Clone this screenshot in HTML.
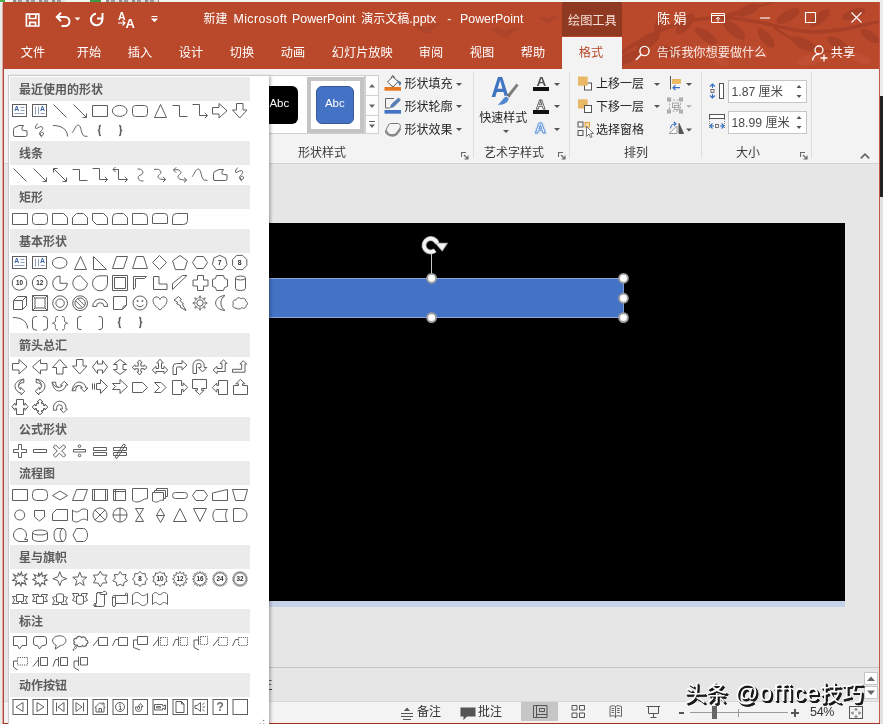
<!DOCTYPE html>
<html lang="zh-CN">
<head>
<meta charset="utf-8">
<title>PowerPoint</title>
<style>
html,body{margin:0;padding:0;}
body{width:883px;height:724px;overflow:hidden;background:#e9ece6;font-family:"Liberation Sans","Noto Sans CJK SC",sans-serif;font-size:12px;color:#262626;}
#outer{position:relative;width:883px;height:724px;overflow:hidden;will-change:transform;}
#outer div,#outer svg{position:absolute;}
.t{white-space:nowrap;line-height:16px;height:16px;}
/* strips from other windows */
#stripT{left:0;top:0;width:883px;height:3px;background:#f1f3ee;}
#stripL{left:0;top:0;width:3px;height:724px;background:#e9ece6;}
#stripR{left:880px;top:0;width:3px;height:724px;background:#ececec;}
#stripR2{left:880px;top:96px;width:3px;height:101px;background:#222;}
#stripR3{left:880px;top:197px;width:3px;height:527px;background:#e2e2e2;}
#stripB{display:none;}
/* window */
#win{left:3px;top:2px;width:877px;height:722px;background:#e6e6e6;}
#winborder{display:none;}
#bL1{left:2px;top:3px;width:1px;height:721px;background:#e6aaa2;}
#bL2{left:3px;top:2px;width:1px;height:722px;background:#a8443a;}
#bR{left:879px;top:2px;width:1px;height:722px;background:#c4584a;}
#bB1{left:4px;top:721px;width:875px;height:2px;background:#fbeee9;}
#bB2{left:3px;top:723px;width:877px;height:1px;background:#99352c;}
#titlebar{left:3px;top:2px;width:877px;height:67px;background:#ba482b;overflow:hidden;}
#titlebar .t{color:#fff;}
#ctxtab{left:559px;top:0;width:60px;height:34px;background:#8f3922;}
#fmttab{left:559px;top:35px;width:60px;height:33px;background:#f3f3f3;}
.tab{top:44.7px;font-size:12.2px;}
/* ribbon */
#ribbon{left:4px;top:69px;width:875px;height:94px;background:#f3f3f3;border-bottom:1px solid #d2d2d2;}
.gsep{width:1px;height:86px;background:#dedede;}
.glabel{top:76px;font-size:12px;color:#3a3a3a;}
.rt{font-size:12px;color:#262626;}
.dd{width:0;height:0;border-left:3px solid transparent;border-right:3px solid transparent;border-top:3px solid #555;}
/* work */
#work{left:4px;top:164px;width:875px;height:537px;background:#e6e6e6;}
#slide{left:200px;top:223px;width:645px;height:378px;background:#000;}
#slideshadow{left:200px;top:601px;width:645px;height:5.5px;background:#c5d2e7;}
#shape{left:200px;top:278px;width:423.500px;height:40px;border-right:1px solid #7f9bd3;background:#4472c4;border-top:1px solid #8fa6d6;border-bottom:1px solid #8fa6d6;box-sizing:border-box;}
.hd{width:7.400px;height:7.400px;border-radius:50%;background:#fff;border:1.600px solid #a9a9a9;box-sizing:content-box;}
#notesline{left:268px;top:667px;width:611px;height:1px;background:#c4c4c4;}
/* status */
#status{left:4px;top:701px;width:875px;height:22px;background:#f3f3f3;border-top:1px solid #d6d6d6;box-sizing:border-box;}
.st{font-size:12px;color:#333;top:704px;}
/* panel */
#panel{left:8px;top:76px;width:260.500px;height:648px;background:#fff;box-shadow:1.500px 0 2.500px rgba(0,0,0,0.250);}
#panel:before{content:"";position:absolute;left:0;top:-1px;width:1px;height:649px;background:#c9c9cf;}
#panel:after{content:"";position:absolute;left:0;top:-1px;width:260.500px;height:1px;background:#c9c9cf;}
#panel .sh{left:2px;width:240px;height:24px;line-height:26px;background:#ebebeb;color:#5c5c5c;font-weight:bold;font-size:12px;padding-left:9px;box-sizing:border-box;margin-top:-76px;white-space:nowrap;}
#iconsvg{left:0;top:0;}
#iconsvg text.n{font-family:"Liberation Sans",sans-serif;stroke:none;text-anchor:middle;}
#iconsvg text[fill="#3c63a8"]{text-anchor:start;}
#grip{left:250px;top:642.500px;}
/* watermark */
#wm{left:684.500px;top:676.500px;font-size:21.600px;font-weight:400;line-height:32px;height:32px;color:#fff;white-space:nowrap;text-shadow:1px 1px 0 #1a1a1a,2px 2px 0 #1a1a1a,1.500px 2px 0 #1a1a1a,2px 1.500px 0 #1a1a1a;}
#wm .la{font-size:23.200px;font-weight:400;letter-spacing:1px;margin-left:1px;}

#ttl .cj{font-size:12px;}
#ttl .w{display:inline-block;vertical-align:top;}
#deco{overflow:visible;}

</style>
</head>
<body>
<div id="outer">
<div id="stripT"></div><div id="stripL"></div><div id="stripR"></div><div id="stripR2"></div><div id="stripR3"></div><div id="stripB"></div>
<div id="tb1" style="left:0;top:0;width:5px;height:2px;background:#4caf50"></div><div style="left:13px;top:0;width:52px;height:2px;background:repeating-linear-gradient(90deg,#8d8d8d 0 3px,#d9dcd6 3px 5px,#9a9a9a 5px 9px,#e2e4df 9px 13px)"></div><div style="left:90px;top:0;width:11px;height:2px;background:#3d9b47"></div><div style="left:106px;top:0;width:53px;height:2px;background:repeating-linear-gradient(90deg,#8d8d8d 0 3px,#d9dcd6 3px 5px,#9a9a9a 5px 9px,#e2e4df 9px 13px)"></div>
<div id="win"></div>
<div id="titlebar">
<svg id="deco" width="360" height="67" viewBox="0 0 360 67" style="left:517px;top:0">
<g fill="#a33f25" opacity="0.800">
<path d="M85 62C110 40 150 14 200 14C240 14 270 30 300 28C330 26 345 20 360 18V21C345 24 330 30 300 31.500C270 33 240 18 200 17.500C152 17 112 44 88 64Z"/>
<path d="M200 15C215 8 235 4 250 0H256C238 6 220 11 204 18Z"/>
<path d="M255 24C275 40 300 50 330 50L329 52C300 53 273 42 253 26Z"/>
<ellipse cx="128" cy="40" rx="14" ry="5.5" transform="rotate(-35 128 40)"/>
<ellipse cx="150" cy="50" rx="13" ry="5" transform="rotate(20 150 50)"/>
<ellipse cx="165" cy="22" rx="13" ry="5.5" transform="rotate(-50 165 22)"/>
<ellipse cx="186" cy="34" rx="13" ry="5" transform="rotate(35 186 34)"/>
<ellipse cx="214" cy="28" rx="14" ry="5.5" transform="rotate(40 214 28)"/>
<ellipse cx="228" cy="8" rx="12" ry="5" transform="rotate(-25 228 8)"/>
<ellipse cx="246" cy="36" rx="12" ry="5" transform="rotate(50 246 36)"/>
<ellipse cx="268" cy="14" rx="13" ry="5.5" transform="rotate(-30 268 14)"/>
<ellipse cx="284" cy="42" rx="13" ry="5.5" transform="rotate(25 284 42)"/>
<ellipse cx="300" cy="16" rx="12" ry="5" transform="rotate(-40 300 16)"/>
<ellipse cx="318" cy="42" rx="12" ry="5" transform="rotate(30 318 42)"/>
<ellipse cx="334" cy="12" rx="12" ry="5" transform="rotate(-20 334 12)"/>
<ellipse cx="350" cy="34" rx="11" ry="4.5" transform="rotate(35 350 34)"/>
<ellipse cx="108" cy="56" rx="12" ry="5" transform="rotate(-30 108 56)"/>
<ellipse cx="140" cy="20" rx="10" ry="4" transform="rotate(-60 140 20)"/>
</g>
<g fill="#c4553a" opacity="0.500">
<ellipse cx="176" cy="48" rx="12" ry="5" transform="rotate(-20 176 48)"/>
<ellipse cx="236" cy="50" rx="12" ry="5" transform="rotate(15 236 50)"/>
<ellipse cx="290" cy="58" rx="13" ry="5" transform="rotate(-10 290 58)"/>
<ellipse cx="340" cy="56" rx="12" ry="5" transform="rotate(20 340 56)"/>
<ellipse cx="200" cy="58" rx="10" ry="4" transform="rotate(30 200 58)"/>
</g>
<g fill="#a9442a" opacity="0.700"><path d="M-108 24q8-4 14 2q7-7 16-4q-8 2-12 9q-6 1-10-3z"/><path d="M-30 28q8-5 15 1q8-6 16-3q-8 3-12 9q-7 1-11-3z"/><path d="M18 16q6-3 10 1q5-5 12-3q-6 2-9 7q-5 1-8-2z"/></g>
</svg>
<div id="ctxtab"></div>
<div id="fmttab"></div>
</div>
<!-- quick access toolbar -->
<svg width="140" height="24" viewBox="20 6 140 24" style="left:20px;top:6px" fill="none" stroke="#fff" stroke-width="1.6">
<path d="M26.400 14.200H38.800V26H26.400ZM29.500 14.200V18.500H35.800V14.200M29.800 26V22.300H35.500V26" stroke-width="1.700"/>
<path d="M57.500 17H65A4.500 4.500 0 0 1 65 26H61.500" stroke-width="2"/><path d="M61 12.800L56.800 17L61 21.200" stroke-width="2"/>
<path d="M74.500 17.500h6l-3 3z" fill="#fff" stroke="none"/>
<path d="M102.500 13V18.500H97" stroke-width="2"/><path d="M102.300 19A5.700 5.700 0 1 1 96 13.800" stroke-width="2"/>
<path d="M151.500 16.500h6M152.300 19h4.400l-2.200 2.400z" stroke-width="1.200" fill="#fff"/>
</svg>
<div class="t" style="left:118px;top:7.500px;font-size:10.500px;color:#fff;font-weight:bold">A</div>
<div class="t" style="left:125.500px;top:16px;font-size:13px;color:#fff;font-weight:bold">A</div>
<svg width="10" height="8" viewBox="0 0 10 8" style="left:118px;top:19px" fill="none" stroke="#fff" stroke-width="1.100"><path d="M0 4H7M4.500 1.500L7 4L4.500 6.500"/></svg>
<div class="t" id="ttl" style="left:203.5px;top:11px;font-size:12.4px;color:#fff"><span class="w cj" style="width:30px">新建</span><span class="w" style="width:58.5px;letter-spacing:0.4px">Microsoft</span><span class="w" style="width:69.3px">PowerPoint</span><span class="w" style="width:85.9px"><span class="cj">演示文稿</span>.pptx</span><span class="w" style="width:12.8px">-</span><span class="w">PowerPoint</span></div>
<div class="t" style="left:568px;top:12.5px;font-size:12.2px;color:#f7ded6">绘图工具</div>
<div class="t" style="left:657px;top:11px;font-size:13px;color:#fff">陈 娟</div>
<svg width="160" height="20" viewBox="708 8 160 20" style="left:708px;top:8px" fill="none" stroke="#fff" stroke-width="1">
<path d="M711.500 13.500H724.500V22.500H711.500ZM711.500 15.500H724.500M718 17.500V21.500M715.800 19.300L718 17.200L720.200 19.300"/>
<path d="M760 18H770" stroke-width="1.100"/>
<path d="M805.500 12.500H815.500V22.500H805.500Z" stroke-width="1.100"/>
<path d="M851.500 12.500L861.500 22.500M861.500 12.500L851.500 22.500" stroke-width="1.100"/>
</svg>
<!-- tabs -->
<div class="t tab" style="left:20.8px;color:#fff">文件</div>
<div class="t tab" style="left:76.8px;color:#fff">开始</div>
<div class="t tab" style="left:127.8px;color:#fff">插入</div>
<div class="t tab" style="left:178.8px;color:#fff">设计</div>
<div class="t tab" style="left:229.8px;color:#fff">切换</div>
<div class="t tab" style="left:280.8px;color:#fff">动画</div>
<div class="t tab" style="left:331.8px;color:#fff">幻灯片放映</div>
<div class="t tab" style="left:418.8px;color:#fff">审阅</div>
<div class="t tab" style="left:469.8px;color:#fff">视图</div>
<div class="t tab" style="left:520.8px;color:#fff">帮助</div>
<div class="t tab" style="left:578.8px;color:#b7472a">格式</div>
<svg width="18" height="18" viewBox="0 0 18 18" style="left:634px;top:44px" fill="none" stroke="#fff" stroke-width="1.4"><circle cx="10.5" cy="7" r="4.6"/><path d="M7.2 10.5L2 16"/></svg>
<div class="t tab" style="left:656.8px;color:#fbe9e3">告诉我你想要做什么</div>
<svg width="20" height="20" viewBox="0 0 20 20" style="left:810px;top:43px" fill="none" stroke="#fff" stroke-width="1.3"><circle cx="9" cy="7" r="4"/><path d="M2.5 17.5C3 13.5 6 11 9 11"/><path d="M14 11.5V18.5M10.5 15H17.5"/></svg>
<div class="t tab" style="left:830.8px;color:#fff">共享</div>

<div id="ribbon"></div>
<!-- shape styles gallery -->
<div style="left:268px;top:75px;width:97px;height:59px;background:#fff;border:1px solid #d0d0d0;box-sizing:border-box"></div>
<div style="left:250px;top:86px;width:48px;height:38px;background:#000;border-radius:6px"></div>
<div class="t" style="left:269.500px;top:95px;font-size:11.400px;color:#fff">Abc</div>
<div style="left:307px;top:77px;width:56.500px;height:56px;border:4px solid #c4c4c4;box-sizing:border-box;background:#fff"></div>
<div style="left:316px;top:86px;width:38.300px;height:38px;background:#4472c4;border-radius:6px;border:1px solid #36599c;box-sizing:border-box"></div>
<div class="t" style="left:325px;top:95px;font-size:11.400px;color:#fff">Abc</div>
<div style="left:365px;top:75px;width:14px;height:21px;border:1px solid #d0d0d0;box-sizing:border-box;background:#fdfdfd"></div>
<div style="left:365px;top:95px;width:14px;height:21px;border:1px solid #d0d0d0;box-sizing:border-box;background:#fdfdfd"></div>
<div style="left:365px;top:115px;width:14px;height:19px;border:1px solid #d0d0d0;box-sizing:border-box;background:#fdfdfd"></div>
<svg width="14" height="59" viewBox="365 75 14 59" style="left:365px;top:75px" fill="#666"><path d="M369 87.5h6l-3-3.5zM369 104.5h6l-3 3.5zM369 124.5h6l-3 3.5z"/><path d="M369 121.5h6" stroke="#666" stroke-width="1" fill="none"/></svg>
<!-- fill / outline / effects -->
<svg width="20" height="66" viewBox="384 72 20 66" style="left:384px;top:72px" fill="none" stroke="#555" stroke-width="1">
<path d="M387.500 82L392.500 76.800L398.200 81.500L393 87Z" fill="#fff"/><path d="M391 78.500L392.500 75.500L395 77.500"/><path d="M396.800 79.800L401 82.300Q401.600 84.800 399.600 86L398.200 82Z" fill="#44709f" stroke="none"/>
<rect x="384.500" y="87" width="16.500" height="3.700" fill="#e67a22" stroke="none"/>
<path d="M385.500 108V98.500H394" stroke="#666"/><path d="M385.500 108H390" stroke="#666"/><path d="M390.500 107.500L391.500 104.500L398.500 98L400.500 100L393.500 106.800Z" fill="#5580bb" stroke="#47699a" stroke-width="0.700"/>
<rect x="384.500" y="110" width="16.500" height="3.700" fill="#4472c4" stroke="none"/>
<path d="M390.500 123.500H398.500A2.500 3 0 0 1 400 128L396 133.500A3 2 0 0 1 393.500 134.500H387.500A2.500 3 0 0 1 386 130L388.500 125A3 2.500 0 0 1 390.500 123.500Z" fill="#f4f4f4" stroke="#777"/><path d="M386 130.500Q387 136 394 135.500Q396.500 135.500 400.500 128.500" stroke="#8a8a8a" stroke-width="2.200"/>
</svg>
<div class="t rt" style="left:404.5px;top:76px">形状填充</div>
<div class="t rt" style="left:404.5px;top:99px">形状轮廓</div>
<div class="t rt" style="left:404.5px;top:122px">形状效果</div>
<div class="dd" style="left:456px;top:83px"></div>
<div class="dd" style="left:456px;top:105px"></div>
<div class="dd" style="left:456px;top:128px"></div>
<div class="t glabel" style="left:298px;top:144.5px">形状样式</div>
<svg class="lnch" width="8" height="8" viewBox="0 0 8 8" style="left:461px;top:152px" fill="none" stroke="#666" stroke-width="1.100"><path d="M0.500 5V0.500H5M3 3L7 7M7 3.500V7H3.500"/></svg>
<div class="gsep" style="left:473px;top:72px"></div>
<!-- wordart -->
<div class="t" style="left:490.500px;top:73.200px;font-size:29px;line-height:29px;height:29px;font-weight:bold;color:#3e74c0;transform:scaleX(0.870);transform-origin:0 0">A</div>
<svg width="26" height="26" viewBox="494 82 26 26" style="left:494px;top:82px"><path d="M516.500 83.500L518.500 85.500L510 96.500L507.500 94.500Z" fill="#7d7d7d"/><path d="M507.800 94.300L510.200 96.600L509 98L506.500 96Z" fill="#5a5a5a"/><path d="M506.700 96C502 96.500 502.500 101 496.500 105C503 106.500 509 103.500 509.300 98Z" fill="#4f86cf" stroke="#f3f3f3" stroke-width="1.200"/></svg>
<div class="t rt" style="left:479.200px;top:110px">快速样式</div>
<div class="dd" style="left:503px;top:130px"></div>
<div class="t" style="left:536.500px;top:74px;font-size:13.500px;font-weight:bold;color:#505050">A</div>
<div style="left:533px;top:87px;width:16px;height:4px;background:#111"></div>
<div class="t" style="left:536px;top:96.500px;font-size:13px;font-weight:bold;color:#fff;-webkit-text-stroke:0.8px #555">A</div>
<div style="left:533px;top:110px;width:16px;height:4px;background:#111"></div>
<div class="t" style="left:535px;top:120px;font-size:15px;font-weight:bold;color:#fff;-webkit-text-stroke:0.9px #5b8fd6;text-shadow:0 0 3px #7fb0ee">A</div>
<div class="dd" style="left:554px;top:83px"></div>
<div class="dd" style="left:554px;top:105px"></div>
<div class="dd" style="left:554px;top:128px"></div>
<div class="t glabel" style="left:484px;top:144.500px">艺术字样式</div>
<svg class="lnch" width="8" height="8" viewBox="0 0 8 8" style="left:558px;top:152px" fill="none" stroke="#666" stroke-width="1.100"><path d="M0.500 5V0.500H5M3 3L7 7M7 3.500V7H3.500"/></svg>
<div class="gsep" style="left:569px;top:72px"></div>
<!-- arrange -->
<svg width="18" height="66" viewBox="577 72 18 66" style="left:577px;top:72px" fill="none" stroke="#555" stroke-width="1">
<rect x="584.500" y="83" width="7" height="7" fill="#fff"/><rect x="578" y="76.500" width="9.700" height="9.200" fill="#eab766" stroke="none"/>
<rect x="578" y="99.300" width="9.700" height="9.200" fill="#eab766" stroke="none"/><rect x="584.500" y="105.500" width="7" height="7" fill="#fff"/>
<rect x="578" y="122" width="5" height="5"/><rect x="578" y="130.500" width="5" height="5"/><rect x="585" y="122.500" width="4.500" height="4.500" stroke="#e0a040" fill="#f5dcae"/><path d="M586.500 126.500V136.500L589 134L590.500 137.500L592 137L590.500 133.500H593.500Z" fill="#fff" stroke="#555" stroke-width="0.800"/>
</svg>
<div class="t rt" style="left:596px;top:76.200px">上移一层</div>
<div class="t rt" style="left:596px;top:98.800px">下移一层</div>
<div class="t rt" style="left:596px;top:122.200px">选择窗格</div>
<div class="dd" style="left:654px;top:83px"></div>
<div class="dd" style="left:654px;top:105px"></div>
<svg width="32" height="66" viewBox="666 72 32 66" style="left:666px;top:72px" fill="none" stroke="#555" stroke-width="1">
<path d="M670.500 76V89.500" stroke="#555"/><rect x="672.500" y="79.500" width="8" height="3.800" fill="#f0b860" stroke="#dca040" stroke-width="0.600"/><path d="M673 87.700H680M675.500 85.200L673 87.700L675.500 90.200" stroke="#2f6fbf" stroke-width="1.200"/>
<path d="M686 83h6l-3 3z" fill="#555" stroke="none"/>
<g stroke="#a8a8a8"><rect x="669.500" y="100" width="11" height="11" stroke-dasharray="2 1.500"/><rect x="672.500" y="103" width="6" height="4.500"/><rect x="674.500" y="105.500" width="4.500" height="4"/><rect x="667.500" y="98" width="3" height="3" fill="#b5b5b5"/><rect x="679.500" y="98" width="3" height="3" fill="#b5b5b5"/><rect x="667.500" y="110" width="3" height="3" fill="#b5b5b5"/><rect x="679.500" y="110" width="3" height="3" fill="#b5b5b5"/></g>
<path d="M686 105h6l-3 3z" fill="#b5b5b5" stroke="none"/>
<path d="M677 126V133.500H669Z" fill="#fff" stroke="#999"/><path d="M679 123.500V133.500H683.500Z" fill="#555" stroke="#555"/><path d="M670.500 128.500A5 5 0 0 1 675.500 123.700M673.800 122L676 123.700L674.200 125.700" stroke="#2f6fbf" stroke-width="1.100"/>
<path d="M686 128.500h6l-3 3z" fill="#555" stroke="none"/>
</svg>
<div class="t glabel" style="left:624px;top:144.500px">排列</div>
<div class="gsep" style="left:701px;top:72px"></div>
<!-- size -->
<svg width="20" height="64" viewBox="707 72 20 64" style="left:707px;top:72px" fill="none" stroke="#555" stroke-width="1">
<rect x="719.500" y="83.500" width="4" height="15" fill="#fff"/>
<path d="M712.500 84V88M712.500 94V98M710 86.500L712.500 84L715 86.500M710 95.500L712.500 98L715 95.500" stroke="#2f6fbf" stroke-width="1.1"/><rect x="711" y="89.500" width="3" height="3" stroke="#555" stroke-width="0.8"/>
<rect x="709.500" y="114.500" width="15" height="4" fill="#fff"/><path d="M709.500 119V128M724.500 119V128" stroke-dasharray="1 1" stroke="#888"/>
<path d="M710 126H714M720 126H724M712.500 123.500L710 126L712.500 128.500M721.500 123.500L724 126L721.500 128.500" stroke="#2f6fbf" stroke-width="1.100"/><rect x="715.500" y="124.500" width="3" height="3" stroke="#555" stroke-width="0.800"/>
</svg>
<div style="left:728px;top:80px;width:79px;height:23px;background:#fff;border:1px solid #c6c6c6;box-sizing:border-box"></div>
<div style="left:728px;top:111px;width:79px;height:23px;background:#fff;border:1px solid #c6c6c6;box-sizing:border-box"></div>
<div class="t" style="left:731.500px;top:84px;font-size:12.200px;color:#4a4a4a">1.87 厘米</div>
<div class="t" style="left:731.500px;top:114.500px;font-size:12.200px;color:#4a4a4a">18.99 厘米</div>
<svg width="8" height="56" viewBox="795 79 8 56" style="left:795px;top:79px" fill="#555"><path d="M796.500 88h5l-2.500-3zM796.500 95h5l-2.500 3zM796.500 119h5l-2.500-3zM796.500 126h5l-2.500 3z"/></svg>
<div class="t glabel" style="left:736px;top:144.500px">大小</div>
<svg class="lnch" width="8" height="8" viewBox="0 0 8 8" style="left:800px;top:152px" fill="none" stroke="#666" stroke-width="1.100"><path d="M0.500 5V0.500H5M3 3L7 7M7 3.500V7H3.500"/></svg>
<div class="gsep" style="left:811px;top:72px"></div>
<svg width="12" height="8" viewBox="0 0 12 8" style="left:859px;top:151.500px" fill="none" stroke="#666" stroke-width="1.700"><path d="M1.800 6.300L6 2.200L10.200 6.300"/></svg>

<div id="work"></div>
<div id="slide"></div>
<div id="slideshadow"></div>
<div id="shape"></div>
<div style="left:431px;top:254px;width:1px;height:21px;background:#c8c8c8"></div>
<svg width="230" height="60" viewBox="410 265 230 60" style="left:410px;top:265px"><circle cx="431.6" cy="278.3" r="4.400" fill="#fff" stroke="#a2a2a2" stroke-width="1.900"/><circle cx="623.5" cy="278.3" r="4.400" fill="#fff" stroke="#a2a2a2" stroke-width="1.900"/><circle cx="623.5" cy="298.2" r="4.400" fill="#fff" stroke="#a2a2a2" stroke-width="1.900"/><circle cx="623.5" cy="317.6" r="4.400" fill="#fff" stroke="#a2a2a2" stroke-width="1.900"/><circle cx="431.6" cy="317.6" r="4.400" fill="#fff" stroke="#a2a2a2" stroke-width="1.900"/></svg>
<svg width="32" height="26" viewBox="418 232 32 26" style="left:418px;top:232px" fill="none">
<path d="M435 250.400A6.700 6.700 0 1 1 437.100 243.200" stroke="#9a9a9a" stroke-width="5"/>
<path d="M434.500 242.800H448.300L442.300 251.800Z" fill="#9a9a9a"/>
<path d="M435 250.400A6.700 6.700 0 1 1 437.100 243.200" stroke="#f4f4f4" stroke-width="3.400"/>
<path d="M436 243.500H446.800L442.200 250.500Z" fill="#f4f4f4"/>
</svg>
<div id="notesline"></div>
<div class="t" style="left:174.500px;top:677px;font-size:12px;color:#444;width:98px;text-align:right">单击此处添加备注</div>
<div style="left:864px;top:672px;width:14px;height:13px;background:#fff;border:1px solid #c6c6c6;box-sizing:border-box"></div>
<div style="left:864px;top:686px;width:14px;height:13px;background:#fff;border:1px solid #c6c6c6;box-sizing:border-box"></div>
<svg width="14" height="28" viewBox="864 672 14 28" style="left:864px;top:672px" fill="#666"><path d="M867 681h8l-4-4.500zM867 690.500h8l-4 4.500z"/></svg>

<div id="status"></div>
<svg width="16" height="16" viewBox="0 0 16 16" style="left:399px;top:704.500px" fill="none" stroke="#555" stroke-width="1.100"><path d="M2 8.500H14M2 11.500H14M4 14.500H12"/><path d="M5 6h6l-3-3.500z" fill="#555" stroke="none"/></svg>
<div class="t st" style="left:417px">备注</div>
<svg width="18" height="16" viewBox="0 0 18 16" style="left:459px;top:704.500px"><path d="M1.500 2.500H16.500V11.500H8L4.500 15V11.500H1.500Z" fill="#555"/></svg>
<div class="t st" style="left:478px">批注</div>
<div style="left:521px;top:702px;width:37px;height:21px;background:#c6c6c6"></div>
<svg width="160" height="22" viewBox="521 702 160 22" style="left:521px;top:702px" fill="none" stroke="#555" stroke-width="1">
<path d="M533.500 705.500H547V717.500H533.500ZM536.500 705.500V717.500M536.500 714.500H547M539.500 708.500H544.500V711.500H539.500Z"/>
<path d="M572 705.500H577V710H572ZM579.500 705.500H584.500V710H579.500ZM572 713H577V717.500H572ZM579.500 713H584.500V717.500H579.500Z"/>
<path d="M610 706.500C612 705.500 614 705.500 615.500 706.500C617 705.500 619 705.500 621.500 706.500V716.500C619 715.500 617 715.500 615.500 716.500C614 715.500 612 715.500 610 716.500ZM615.500 706.500V718M611.500 708.500H614M611.500 710.500H614M611.500 712.500H614M617 708.500H619.800M617 710.500H619.800M617 712.500H619.800" stroke-width="0.900"/>
<path d="M646.500 706.500H660M648.500 706.500V713.500H658.500V706.500M653.500 713.500V717.500M650.500 717.500H656.500"/>
</svg>
<div style="left:679px;top:711.500px;width:5px;height:2px;background:#555"></div>
<div style="left:690px;top:712px;width:98px;height:1px;background:#9a9a9a"></div>
<div style="left:738px;top:708.500px;width:1px;height:8px;background:#9a9a9a"></div>
<div style="left:712px;top:706px;width:5px;height:13px;background:#666"></div>
<div style="left:791px;top:711.500px;width:8px;height:2px;background:#555"></div>
<div style="left:794px;top:708.500px;width:2px;height:8px;background:#555"></div>
<div class="t st" style="left:810px;font-size:12.500px;letter-spacing:-0.300px">54%</div>
<svg width="16" height="16" viewBox="0 0 16 16" style="left:848px;top:704.500px" fill="none" stroke="#555" stroke-width="1"><rect x="1.500" y="1.500" width="13" height="12"/><path d="M8 3.500V6M8 10V12.500M3.500 8H6M10 8H12.500M6.500 5L8 3.500L9.500 5M6.500 11L8 12.500L9.500 11M5 6.500L3.500 8L5 9.500M11 6.500L12.500 8L11 9.500" stroke-width="0.800"/></svg>
<div id="bL1"></div><div id="bL2"></div><div id="bR"></div><div id="bB1"></div><div id="bB2"></div>

<div id="panel">
<div class="sh" style="top:77px">最近使用的形状</div>
<div class="sh" style="top:141px">线条</div>
<div class="sh" style="top:185px">矩形</div>
<div class="sh" style="top:229px">基本形状</div>
<div class="sh" style="top:333px">箭头总汇</div>
<div class="sh" style="top:417px">公式形状</div>
<div class="sh" style="top:461px">流程图</div>
<div class="sh" style="top:545px">星与旗帜</div>
<div class="sh" style="top:609px">标注</div>
<div class="sh" style="top:673px">动作按钮</div>
<svg id="iconsvg" width="260" height="648" viewBox="8 76 260 648">
<g fill="none" stroke="#5e5e5e" stroke-width="1">
<g transform="translate(10 101)"><rect x="2.5" y="3.5" width="14" height="12" fill="#fff"/><text x="4.2" y="9.8" font-size="6.8" class="n" fill="#3c63a8" stroke="none" font-weight="bold">A</text><path d="M10.5 6.5H14.5M10.5 9.5H14.5M4.5 12.5H14.5" stroke="#8e9fc0"/></g>
<g transform="translate(30 101)"><rect x="2.5" y="3.5" width="14" height="12" fill="#fff"/><text x="10" y="9.8" font-size="6.8" class="n" fill="#3c63a8" stroke="none" font-weight="bold">A</text><path d="M5.5 5.5V13.5M8.5 5.5V13.5M10.5 12.5H14.5" stroke="#8e9fc0"/></g>
<g transform="translate(50 101)"><path d="M3.5 3.5L16.5 16.5"/></g>
<g transform="translate(70 101)"><path d="M3.5 3.5L16.5 16.5M16.5 12.500V16.5H12.500"/></g>
<g transform="translate(90 101)"><path d="M2.5 4.5H17.5V15.5H2.5Z"/></g>
<g transform="translate(110 101)"><ellipse cx="9.700" cy="9.900" rx="7.300" ry="5.500"/></g>
<g transform="translate(130 101)"><rect x="2.5" y="4.5" width="15" height="11" rx="3"/></g>
<g transform="translate(150 101)"><path d="M10.5 3.5L16.5 16.5H4.5Z"/></g>
<g transform="translate(170 101)"><path d="M2.5 4.5H9.5V15.5H17.5"/></g>
<g transform="translate(190 101)"><path d="M2.5 3.5H9.5V14.5H17.5M14.800 11.800L17.500 14.500L14.800 17.200"/></g>
<g transform="translate(210 101)"><path d="M2.5 6.5L9 6.5L9 2.5L17 9.75L9 17L9 13L2.5 13Z"/></g>
<g transform="translate(230 101)"><path d="M13 2.5L13 9L17 9L9.75 17L2.5 9L6.5 9L6.5 2.5Z"/></g>
<g transform="translate(10 121)"><path d="M5 15.5Q3.5 15.5 3.5 14V8.5Q3.5 7 5 6.5L9 4.5H13.5Q11 7.5 12 8.800Q13 9.800 17 9.800V14Q17 15.5 15.5 15.5Z"/></g>
<g transform="translate(30 121)"><path d="M7.600 2.600C6.500 4 5 6 5.500 7.200C6.500 8.500 9 5.500 11 5.600C13.500 5.800 13 8 11.500 9.500C10 11 9 12 9.500 13.500C10 15 13 15 13.500 13C14 11 11 10.500 10.500 12.500C10 14.500 11.500 16 12.200 16.500"/></g>
<g transform="translate(50 121)"><path d="M3 4.500C11 4.500 17.500 8 17.500 15.500"/></g>
<g transform="translate(70 121)"><path d="M2.200 11.700C4.500 9 5.500 4.100 8.300 4.100C11.500 4.100 11 14.800 14.500 15.100C15.500 15.300 16.500 15.300 17.500 15.300"/></g>
<g transform="translate(90 121)"><path d="M11 4.5C9 4.5 9.500 6 9.500 7.500C9.500 9 9 9.500 7.800 9.500C9 9.500 9.500 10 9.500 11.500C9.500 13 9 14.500 11 14.500" stroke-width="1.500"/></g>
<g transform="translate(110 121)"><path d="M9 4.5C11 4.5 10.500 6 10.500 7.500C10.500 9 11 9.500 12.200 9.500C11 9.500 10.500 10 10.500 11.500C10.500 13 11 14.500 9 14.500" stroke-width="1.500"/></g>
<g transform="translate(10 165)"><path d="M3.5 3.5L16.5 16.5"/></g>
<g transform="translate(30 165)"><path d="M3.5 3.5L16.5 16.5M16.5 12.500V16.5H12.500"/></g>
<g transform="translate(50 165)"><path d="M3.5 3.5L16.5 16.5M16.5 12.500V16.5H12.500M3.5 7.500V3.5H7.500"/></g>
<g transform="translate(70 165)"><path d="M2.5 4.5H9.5V15.5H17.5"/></g>
<g transform="translate(90 165)"><path d="M2.5 3.5H9.5V14.5H17.5M14.800 11.800L17.500 14.500L14.800 17.200"/></g>
<g transform="translate(110 165)"><path d="M3 4.5H8.5V14.5H17.5M14.800 11.800L17.500 14.500L14.800 17.200M5.700 1.800L3 4.500L5.700 7.200"/></g>
<g transform="translate(130 165)"><path d="M7.500 4C14 3.500 14 9.500 10.500 10C7 10.500 7 16.500 13.500 16"/></g>
<g transform="translate(150 165)"><path d="M4 4.500C11 3 12.500 8 9.500 9.500C6.500 11 7.500 15 15.500 14.500M13 12L15.700 14.500L13 17"/></g>
<g transform="translate(170 165)"><path d="M3.500 5C11 3.500 12.500 8 9.500 9.500C6.500 11 7.500 15.500 16.500 15M14 12.500L16.700 15L14 17.500M6.200 2.300L3.500 5L6.200 7.700"/></g>
<g transform="translate(190 165)"><path d="M2.200 11.700C4.500 9 5.500 4.100 8.300 4.100C11.500 4.100 11 14.800 14.500 15.100C15.500 15.300 16.500 15.300 17.500 15.300"/></g>
<g transform="translate(210 165)"><path d="M5 15.5Q3.5 15.5 3.5 14V8.5Q3.5 7 5 6.5L9 4.5H13.5Q11 7.5 12 8.800Q13 9.800 17 9.800V14Q17 15.5 15.5 15.5Z"/></g>
<g transform="translate(230 165)"><path d="M7.600 2.600C6.500 4 5 6 5.500 7.200C6.500 8.500 9 5.500 11 5.600C13.500 5.800 13 8 11.500 9.500C10 11 9 12 9.500 13.500C10 15 13 15 13.500 13C14 11 11 10.500 10.500 12.500C10 14.500 11.500 16 12.200 16.500"/></g>
<g transform="translate(10 209)"><path d="M2.5 4.5H17.5V15.5H2.5Z"/></g>
<g transform="translate(30 209)"><rect x="2.5" y="4.5" width="15" height="11" rx="3"/></g>
<g transform="translate(50 209)"><path d="M2.5 4.5H13.5L17.5 8.5V15.5H2.5Z"/></g>
<g transform="translate(70 209)"><path d="M6.5 4.5H13.5L17.5 8.5V15.5H2.5V8.5Z"/></g>
<g transform="translate(90 209)"><path d="M2.5 4.5H13.5L17.5 8.5V15.5H6.5L2.5 11.5Z"/></g>
<g transform="translate(110 209)"><path d="M6.5 4.5H13.5L17.5 8.5V15.5H2.5V8.5Q2.5 4.5 6.5 4.5Z"/></g>
<g transform="translate(130 209)"><path d="M2.5 4.5H13.5Q17.5 4.5 17.5 8.5V15.5H2.5Z"/></g>
<g transform="translate(150 209)"><path d="M5.5 4.5H14.5Q17.5 4.5 17.5 7.5V14.5H2.5V7.5Q2.5 4.5 5.5 4.5Z"/></g>
<g transform="translate(170 209)"><path d="M6.5 4.5H17.5V11.5Q17.5 15.5 13.5 15.5H2.5V8.5Q2.5 4.5 6.5 4.5Z"/></g>
<g transform="translate(10 253)"><rect x="2.5" y="3.5" width="14" height="12" fill="#fff"/><text x="4.2" y="9.8" font-size="6.8" class="n" fill="#3c63a8" stroke="none" font-weight="bold">A</text><path d="M10.5 6.5H14.5M10.5 9.5H14.5M4.5 12.5H14.5" stroke="#8e9fc0"/></g>
<g transform="translate(30 253)"><rect x="2.5" y="3.5" width="14" height="12" fill="#fff"/><text x="10" y="9.8" font-size="6.8" class="n" fill="#3c63a8" stroke="none" font-weight="bold">A</text><path d="M5.5 5.5V13.5M8.5 5.5V13.5M10.5 12.5H14.5" stroke="#8e9fc0"/></g>
<g transform="translate(50 253)"><ellipse cx="9.700" cy="9.900" rx="7.300" ry="5.500"/></g>
<g transform="translate(70 253)"><path d="M10.5 3.5L16.5 16.5H4.5Z"/></g>
<g transform="translate(90 253)"><path d="M3.5 3.5V16.5H16.5Z"/></g>
<g transform="translate(110 253)"><path d="M6.5 3.5H17.5L13.5 15.5H2.5Z"/></g>
<g transform="translate(130 253)"><path d="M6.5 3.5H13.5L17.5 15.5H2.5Z"/></g>
<g transform="translate(150 253)"><path d="M9.5 2.5L16.5 9.5L9.5 16.5L2.5 9.5Z"/></g>
<g transform="translate(170 253)"><path d="M10 2.5L17.42 7.89L14.58 16.61L5.42 16.61L2.58 7.89Z"/></g>
<g transform="translate(190 253)"><path d="M6.5 3.5H13.5L17.5 9.5L13.5 15.5H6.5L2.5 9.5Z"/></g>
<g transform="translate(210 253)"><path d="M9.7 2.3L15.56 5.12L17.01 11.47L12.95 16.56L6.45 16.56L2.39 11.47L3.84 5.12Z"/><text x="9.7" y="12.1" font-size="6.8" class="n" font-weight="bold" fill="#2a2a2a">7</text></g>
<g transform="translate(230 253)"><path d="M12.65 2.39L16.81 6.55L16.81 12.45L12.65 16.61L6.75 16.61L2.59 12.45L2.59 6.55L6.75 2.39Z"/><text x="9.7" y="11.9" font-size="6.8" class="n" font-weight="bold" fill="#2a2a2a">8</text></g>
<g transform="translate(10 273)"><path d="M9.5 2.4L13.91 3.83L16.63 7.58L16.63 12.22L13.91 15.97L9.5 17.4L5.09 15.97L2.37 12.22L2.37 7.58L5.09 3.83Z"/><text x="9.5" y="12.2" font-size="6.3" class="n" font-weight="bold" fill="#2a2a2a">10</text></g>
<g transform="translate(30 273)"><path d="M11.64 2.66L15 4.6L16.94 7.96L16.94 11.84L15 15.2L11.64 17.14L7.76 17.14L4.4 15.2L2.46 11.84L2.46 7.96L4.4 4.6L7.76 2.66Z"/><text x="9.7" y="12.2" font-size="6.3" class="n" font-weight="bold" fill="#2a2a2a">12</text></g>
<g transform="translate(50 273)"><path d="M10 10.300H17.300A7.300 7.300 0 1 1 10 3Z"/></g>
<g transform="translate(70 273)"><path d="M10.500 2.800A7.300 7.300 0 1 0 17.400 10.300Z"/></g>
<g transform="translate(90 273)"><path d="M10 2.800H17.500V10.300A7.500 7.500 0 1 1 10 2.800Z"/></g>
<g transform="translate(110 273)"><path d="M2.5 2.5H17.5V17.5H2.5ZM4.5 4.5H15.5V15.5H4.5Z"/></g>
<g transform="translate(130 273)"><path d="M3.5 3.5H16.5L14.5 5.5H5.5V14.5L3.5 16.5Z"/></g>
<g transform="translate(150 273)"><path d="M3.5 3.5H9V11H17V16.5H3.5Z"/></g>
<g transform="translate(170 273)"><path d="M2.5 16.5V10.500L12.500 2.5H17Z"/></g>
<g transform="translate(190 273)"><path d="M7.5 2.5H13.5V7H18V13H13.5V17.5H7.5V13H3V7H7.5Z"/></g>
<g transform="translate(210 273)"><path d="M6.5 2.5H13.5A4 4 0 0 0 17.5 6.5V13.5A4 4 0 0 0 13.5 17.5H6.5A4 4 0 0 0 2.5 13.5V6.5A4 4 0 0 0 6.5 2.5Z"/></g>
<g transform="translate(230 273)"><path d="M5.5 5V15.500A5 2 0 0 0 15.5 15.500V5"/><ellipse cx="10.500" cy="5" rx="5" ry="2"/></g>
<g transform="translate(10 293)"><path d="M3.5 7.5H12.5V16.5H3.5ZM3.5 7.5L7.5 3.5H16.5L12.5 7.5M16.5 3.5V12.5L12.5 16.5"/></g>
<g transform="translate(30 293)"><path d="M2.5 2.5H17.5V17.5H2.5ZM5 5H15V15H5ZM2.5 2.5L5 5M17.5 2.5L15 5M17.5 17.5L15 15M2.5 17.5L5 15"/></g>
<g transform="translate(50 293)"><circle cx="10.100" cy="10.200" r="7.400"/><circle cx="10.100" cy="10.200" r="4.200"/></g>
<g transform="translate(70 293)"><circle cx="10.100" cy="10.200" r="7.400"/><circle cx="10.100" cy="10.200" r="5.200"/><path d="M5.800 8L12.300 14.500M8 5.800L14.500 12.300"/></g>
<g transform="translate(90 293)"><path d="M2.700 13.500A7.500 7.500 0 0 1 17.700 13.500H14A3.800 3.800 0 0 0 6.400 13.500Z"/></g>
<g transform="translate(110 293)"><path d="M3.5 3.5H16.5V12.5L12.5 16.5H3.5ZM12.5 16.5L13.3 13.3L16.5 12.5"/></g>
<g transform="translate(130 293)"><circle cx="10" cy="10" r="7"/><path d="M6.500 12Q10 15.500 13.500 12"/><circle cx="7.600" cy="8" r="0.900" fill="#5e5e5e" stroke="none"/><circle cx="12.400" cy="8" r="0.900" fill="#5e5e5e" stroke="none"/></g>
<g transform="translate(150 293)"><path d="M10 17C2.500 11.500 2.500 7.500 3.500 5.500C5 3 9 3.500 10 6.500C11 3.500 15 3 16.500 5.500C17.500 7.500 17.500 11.500 10 17Z"/></g>
<g transform="translate(170 293)"><path d="M8.5 3.5L4 7L8 9.5L6.5 10.5L11 13L10 14L16 17.5L12.5 11.5L13.5 11L10 7.5L11.5 6.5Z"/></g>
<g transform="translate(190 293)"><circle cx="10" cy="10" r="3.2"/><path d="M15 11.3L17.3 10L15 8.7Z" stroke-width="0.8"/><path d="M12.62 14.45L15.16 15.16L14.45 12.62Z" stroke-width="0.8"/><path d="M8.7 15L10 17.3L11.3 15Z" stroke-width="0.8"/><path d="M5.55 12.62L4.84 15.16L7.38 14.45Z" stroke-width="0.8"/><path d="M5 8.7L2.7 10L5 11.3Z" stroke-width="0.8"/><path d="M7.38 5.55L4.84 4.84L5.55 7.38Z" stroke-width="0.8"/><path d="M11.3 5L10 2.7L8.7 5Z" stroke-width="0.8"/><path d="M14.45 7.38L15.16 4.84L12.62 5.55Z" stroke-width="0.8"/></g>
<g transform="translate(210 293)"><path d="M15 2.500C2.500 3.500 2.500 16.500 15 17.500C9.500 14 9.500 6 15 2.500Z"/></g>
<g transform="translate(230 293)"><path d="M6 15C3 15.5 2 12.5 3.5 11C2 9 3.5 6.5 6 7C6.5 4.5 10 4 11 6C13 4.5 16 5.5 15.5 8C18 8.5 18 12 16 12.5C16.5 15 13.5 16 12 14.5C10.5 16.5 7 16.5 6 15Z"/></g>
<g transform="translate(10 313)"><path d="M3 4.500C11 4.500 17.500 8 17.500 15.500"/></g>
<g transform="translate(30 313)"><path d="M7 3.500H5.500Q2.500 3.500 2.500 6.500V14Q2.500 17 5.500 17H7M13 3.500H14.500Q17.500 3.500 17.500 6.500V14Q17.500 17 14.500 17H13"/></g>
<g transform="translate(50 313)"><path d="M8 3.500C5 3.500 5.500 5.500 5.500 7C5.500 9 4.500 10.200 2.500 10.200C4.500 10.200 5.500 11.500 5.500 13.500C5.500 15 5 17 8 17M12 3.500C15 3.500 14.500 5.500 14.500 7C14.500 9 15.500 10.200 17.500 10.200C15.500 10.200 14.500 11.500 14.500 13.500C14.500 15 15 17 12 17"/></g>
<g transform="translate(70 313)"><path d="M11.5 3.5H10Q7.5 3.5 7.5 6V14Q7.5 16.5 10 16.5H11.5"/></g>
<g transform="translate(90 313)"><path d="M8.5 3.5H10Q12.5 3.5 12.5 6V14Q12.5 16.5 10 16.5H8.5"/></g>
<g transform="translate(110 313)"><path d="M11 4.5C9 4.5 9.500 6 9.500 7.500C9.500 9 9 9.500 7.800 9.500C9 9.500 9.500 10 9.500 11.500C9.500 13 9 14.500 11 14.500" stroke-width="1.500"/></g>
<g transform="translate(130 313)"><path d="M9 4.5C11 4.5 10.500 6 10.500 7.500C10.500 9 11 9.500 12.200 9.500C11 9.500 10.500 10 10.500 11.500C10.500 13 11 14.500 9 14.500" stroke-width="1.500"/></g>
<g transform="translate(10 357)"><path d="M2.5 6.5L9 6.5L9 2.5L17 9.75L9 17L9 13L2.5 13Z"/></g>
<g transform="translate(30 357)"><path d="M17 13L10.5 13L10.5 17L2.5 9.75L10.5 2.5L10.5 6.5L17 6.5Z"/></g>
<g transform="translate(50 357)"><path d="M6.5 17L6.5 10.5L2.5 10.5L9.75 2.5L17 10.5L13 10.5L13 17Z"/></g>
<g transform="translate(70 357)"><path d="M13 2.5L13 9L17 9L9.75 17L2.5 9L6.5 9L6.5 2.5Z"/></g>
<g transform="translate(90 357)"><path d="M2.5 10L7.5 3.5L7.5 7L12.5 7L12.5 3.5L17.5 10L12.5 16.5L12.5 13L7.5 13L7.5 16.5Z"/></g>
<g transform="translate(110 357)"><path d="M10 2.5L16.5 7.5L13 7.5L13 12.5L16.5 12.5L10 17.5L3.5 12.5L7 12.5L7 7.5L3.5 7.5Z"/></g>
<g transform="translate(130 357)"><path d="M8.7 8.7L8.7 5.5L7.5 5.5L10 2.5L12.5 5.5L11.3 5.5L11.3 8.7L11.3 8.7L14.5 8.7L14.5 7.5L17.5 10L14.5 12.5L14.5 11.3L11.3 11.3L11.3 11.3L11.3 14.5L12.5 14.5L10 17.5L7.5 14.5L8.7 14.5L8.7 11.3L8.7 11.3L5.5 11.3L5.5 12.5L2.5 10L5.5 7.5L5.5 8.7L8.7 8.7Z" transform="translate(-0.400 0.400)"/></g>
<g transform="translate(150 357)"><path d="M10 2.200L13.300 6H11.500V11.500H14V9.300L17.800 13L14 16.700V14.500H6V16.700L2.200 13L6 9.300V11.500H8.500V6H6.700Z"/></g>
<g transform="translate(170 357)"><path d="M3 17.500V10Q3 6.500 6.500 6.500H12V3.500L17 8.200L12 13V10H7.500Q6.500 10 6.500 11V17.500Z"/></g>
<g transform="translate(190 357)"><path d="M3 16.500V8.500A5.600 5.600 0 0 1 14.200 8.500V10.500H16.800L12.600 15L8.400 10.500H11V8.500A2.250 2.250 0 0 0 6.500 8.500V16.500Z"/></g>
<g transform="translate(210 357)"><path d="M13.500 2.700L17 6.400H15.200V14.500H7.100V16.700L3.100 13L7.100 9.300V11.500H12V6.400H10Z"/></g>
<g transform="translate(230 357)"><path d="M13.200 3.700L16.600 7.100H15V15.200H2.500V12.300H11.700V7.100H9.900Z"/></g>
<g transform="translate(10 377)"><path d="M13.800 2.100C7 3 4.500 7 5.100 10C5.800 13.500 8 15.500 11 16V17.900L14.800 14.300L10.700 10.400V12.400C9.500 12 8.400 10.500 8.600 8.700C8.800 7 10.500 5.800 13.800 5.600ZM13.800 2.100C10.500 3.500 8.800 5.500 8.600 8.700"/></g>
<g transform="translate(30 377)"><path d="M13.800 2.100C7 3 4.500 7 5.100 10C5.800 13.500 8 15.500 11 16V17.900L14.800 14.300L10.700 10.400V12.400C9.500 12 8.400 10.500 8.600 8.700C8.800 7 10.500 5.800 13.800 5.600ZM13.800 2.100C10.500 3.500 8.800 5.500 8.600 8.700" transform="matrix(-1 0 0 1 20 0)"/></g>
<g transform="translate(50 377)"><path d="M13.800 2.100C7 3 4.500 7 5.100 10C5.800 13.500 8 15.500 11 16V17.900L14.800 14.300L10.700 10.400V12.400C9.500 12 8.400 10.500 8.600 8.700C8.800 7 10.500 5.800 13.800 5.600ZM13.800 2.100C10.500 3.500 8.800 5.500 8.600 8.700" transform="translate(0 -1) rotate(-90 10 10)"/></g>
<g transform="translate(70 377)"><path d="M13.800 2.100C7 3 4.500 7 5.100 10C5.800 13.500 8 15.500 11 16V17.900L14.800 14.300L10.700 10.400V12.400C9.500 12 8.400 10.500 8.600 8.700C8.800 7 10.500 5.800 13.800 5.600ZM13.800 2.100C10.500 3.500 8.800 5.500 8.600 8.700" transform="matrix(1 0 0 -1 0 20) rotate(-90 10 10)"/></g>
<g transform="translate(90 377)"><path d="M2.5 6.5V12.5M4.5 6.5V12.5M6.5 6.5H10.5V2.5L17.5 9.5L10.5 16.5V12.5H6.5Z"/></g>
<g transform="translate(110 377)"><path d="M2.5 6.5H10V2.5L17.5 9.5L10 16.5V12.5H2.5L5.500 9.5Z"/></g>
<g transform="translate(130 377)"><path d="M2.5 5.5H12.5L17.5 10.5L12.5 15.5H2.5Z"/></g>
<g transform="translate(150 377)"><path d="M4.500 5.500H11L16 10.500L11 15.500H4.500L9.500 10.500Z"/></g>
<g transform="translate(170 377)"><path d="M2.5 3.5L11.5 3.5L11.5 8.5L13.2 8.5L13.2 5.8L17.6 10.4L13.2 15L13.2 12.5L11.5 12.5L11.5 17.5L2.5 17.5Z"/></g>
<g transform="translate(190 377)"><path d="M16.5 2.5L16.5 11.5L11.5 11.5L11.5 13.2L14.2 13.2L9.6 17.6L5 13.2L7.5 13.2L7.5 11.5L2.5 11.5L2.5 2.5Z"/></g>
<g transform="translate(210 377)"><path d="M17.5 17.5L8.5 17.5L8.5 12.5L6.8 12.5L6.8 15.2L2.4 10.6L6.8 6L6.8 8.5L8.5 8.5L8.5 3.5L17.5 3.5Z"/></g>
<g transform="translate(230 377)"><path d="M3.5 17.5L3.5 8.5L8.5 8.5L8.5 6.8L5.8 6.8L10.4 2.4L15 6.8L12.5 6.8L12.5 8.5L17.5 8.5L17.5 17.5Z"/></g>
<g transform="translate(10 397)"><path d="M6.500 2.500H13.500V8H15V6L18 9.700L15 13.300V11.400H13.500V17.500H6.500V11.400H5V13.300L2 9.700L5 6V8H6.500Z"/></g>
<g transform="translate(30 397)"><path d="M6.5 6.5L8.5 6.5L8.5 5L7 5L10 2.2L13 5L11.5 5L11.5 6.5L13.5 6.5L13.5 8.5L15 8.5L15 7L17.8 10L15 13L15 11.5L13.5 11.5L13.5 13.5L11.5 13.5L11.5 15L13 15L10 17.8L7 15L8.5 15L8.5 13.5L6.5 13.5L6.5 11.5L5 11.5L5 13L2.2 10L5 7L5 8.5L6.5 8.5Z"/></g>
<g transform="translate(50 397)"><path d="M3.400 13.200V10.500A6.300 6.300 0 0 1 16 10.500V12H17.300L13.600 15.800L10 12H12.300V10.500A2.800 2.800 0 0 0 6.700 10.500V13.200Z"/></g>
<g transform="translate(10 441)"><path d="M8.5 3.5H11.5V8.5H16.5V11.5H11.5V16.5H8.5V11.5H3.5V8.5H8.5Z"/></g>
<g transform="translate(30 441)"><path d="M3.5 8.5H16.5V11.5H3.5Z"/></g>
<g transform="translate(50 441)"><path d="M5.500 3.800L9.500 7.800L13.500 3.800L15.700 6L11.700 10L15.700 14L13.500 16.200L9.500 12.200L5.500 16.200L3.300 14L7.300 10L3.300 6Z"/></g>
<g transform="translate(70 441)"><path d="M3.5 8.5H15.5V11H3.5Z"/><circle cx="9.500" cy="5.200" r="1.300"/><circle cx="9.500" cy="14.500" r="1.300"/></g>
<g transform="translate(90 441)"><path d="M3.5 6.5H16.5V9.5H3.5ZM3.5 11.5H16.5V14.5H3.5Z"/></g>
<g transform="translate(110 441)"><path d="M3.5 6.5H16.5V9.5H3.5ZM3.5 11.5H16.5V14.5H3.5ZM13.500 3L15.500 4L7 17.500L5 16.500Z"/></g>
<g transform="translate(10 485)"><path d="M2.5 4.5H17.5V15.5H2.5Z"/></g>
<g transform="translate(30 485)"><rect x="2.5" y="4.5" width="15" height="11" rx="4"/></g>
<g transform="translate(50 485)"><path d="M10 6L17.5 10.5L10 15L2.5 10.5Z"/></g>
<g transform="translate(70 485)"><path d="M6.5 4.5H17.5L13.5 15.5H2.5Z"/></g>
<g transform="translate(90 485)"><path d="M2.5 4.5H17.5V15.5H2.5ZM4.5 4.5V15.5M15.5 4.5V15.5"/></g>
<g transform="translate(110 485)"><path d="M3.5 4.5H15.5V15.5H3.5ZM5.5 4.5V15.5M3.5 6.5H15.5"/></g>
<g transform="translate(130 485)"><path d="M2.5 3.5H17.5V13.500C13 13.500 11.500 17 7 17C5 17 3.500 16.200 2.5 15.500Z"/></g>
<g transform="translate(150 485)"><path d="M2.5 7.5H13.5V15.5C10 14 9 17.5 5.5 17C4 16.8 3.5 16.5 2.5 16ZM4.5 7.5V5.5H15.5V13.5H13.5M6.5 5.5V3.5H17.5V11.5H15.5"/></g>
<g transform="translate(170 485)"><rect x="2.5" y="7.5" width="15" height="6" rx="3"/></g>
<g transform="translate(190 485)"><path d="M6 5.5H14L17.5 10.5L14 15.5H6L2.5 10.5Z"/></g>
<g transform="translate(210 485)"><path d="M2.5 8L17.5 4.5V15.5H2.5Z"/></g>
<g transform="translate(230 485)"><path d="M2.5 4.5H17.5L14.5 15.5H5.5Z"/></g>
<g transform="translate(10 505)"><circle cx="9.700" cy="10" r="5"/></g>
<g transform="translate(30 505)"><path d="M4.5 5.5H14.5V12L9.5 16L4.5 12Z"/></g>
<g transform="translate(50 505)"><path d="M6.5 4.5H17.5V15.5H2.5V8.5Z"/></g>
<g transform="translate(70 505)"><path d="M2.5 5C5 7.5 8 7.5 10 5.5C12 3.5 15 3.5 17.5 5V15.5C15 13.5 12 14 10 15.5C8 17.5 5 17.5 2.5 15.5Z"/></g>
<g transform="translate(90 505)"><circle cx="10" cy="10" r="7"/><path d="M5 5L15 15M15 5L5 15"/></g>
<g transform="translate(110 505)"><circle cx="10" cy="10" r="7"/><path d="M10 3V17M3 10H17"/></g>
<g transform="translate(130 505)"><path d="M5.5 3.5H13.5L5.5 16.5H13.5Z"/></g>
<g transform="translate(150 505)"><path d="M10.500 3.500L14.500 10.500L10.500 17.500L6.500 10.500ZM6.500 10.500H14.500"/></g>
<g transform="translate(170 505)"><path d="M10 3.5L16.5 16.5H3.5Z"/></g>
<g transform="translate(190 505)"><path d="M3.5 3.5H16.5L10 16.5Z"/></g>
<g transform="translate(210 505)"><path d="M5.5 4.5H17.5C15 6.5 15 14.5 17.5 16.5H5.5C2 14.5 2 6.5 5.5 4.5Z"/></g>
<g transform="translate(230 505)"><path d="M3.5 3.5H10.5A6.5 6.5 0 0 1 10.5 16.5H3.5Z"/></g>
<g transform="translate(10 525)"><path d="M10 16.5A6.5 6.5 0 1 1 16.5 10C16.5 12 15.5 13.5 14.5 14.5H17.5V16.5Z"/></g>
<g transform="translate(30 525)"><path d="M2.5 7.5V14A7.5 2.5 0 0 0 17.5 14V7.5"/><ellipse cx="10" cy="7.5" rx="7.5" ry="2.5"/></g>
<g transform="translate(50 525)"><path d="M7 3.5H13A3 6.5 0 0 1 13 16.5H7A3 6.5 0 0 1 7 3.5ZM13 3.5A3 6.5 0 0 0 13 16.5"/></g>
<g transform="translate(70 525)"><path d="M6.5 3.5H13.5A4 6.5 0 0 1 13.5 16.5H6.5L3 10Z"/></g>
<g transform="translate(10 569)"><path d="M10 6L11.5 2.5L12.5 6.5L17 4.5L14.5 8.5L18 10L14.5 11.5L16.5 16L12 13.5L11 17.5L9 13.5L5 16.5L6.5 12L2 11.5L5.5 9L3 5L7.5 7L8 3.5Z" transform="translate(0.800 0.900) scale(0.920)" stroke-width="1.100"/></g>
<g transform="translate(30 569)"><path d="M9.5 6.5L12 3L12.5 7L17 5.5L14.5 9L18 11L14.5 12L15.5 16L12 14L10 18L8.5 14L4.5 16L6 12.5L2 10.5L5.5 9L3.5 5L8 7L8.5 3Z" transform="translate(0.800 0.900) scale(0.920)" stroke-width="1.100"/></g>
<g transform="translate(50 569)"><path d="M9.8 2.7L11.71 7.79L16.8 9.7L11.71 11.61L9.8 16.7L7.89 11.61L2.8 9.7L7.89 7.79Z"/></g>
<g transform="translate(70 569)"><path d="M9.8 3.1L11.62 7.99L16.84 8.21L12.75 11.46L14.15 16.49L9.8 13.6L5.45 16.49L6.85 11.46L2.76 8.21L7.98 7.99Z"/></g>
<g transform="translate(90 569)"><path d="M10.3 2.2L12.6 6.02L17.05 6.1L14.9 10L17.05 13.9L12.6 13.98L10.3 17.8L8 13.98L3.55 13.9L5.7 10L3.55 6.1L8 6.02Z"/></g>
<g transform="translate(110 569)"><path d="M10.2 2.7L12.37 5.7L16.06 5.52L15.07 9.09L17.51 11.87L14.11 13.32L13.45 16.96L10.2 15.2L6.95 16.96L6.29 13.32L2.89 11.87L5.33 9.09L4.34 5.52L8.03 5.7Z"/></g>
<g transform="translate(130 569)"><path d="M10 2.5L12.22 4.64L15.3 4.7L15.36 7.78L17.5 10L15.36 12.22L15.3 15.3L12.22 15.36L10 17.5L7.78 15.36L4.7 15.3L4.64 12.22L2.5 10L4.64 7.78L4.7 4.7L7.78 4.64Z"/><text x="10" y="12.3" font-size="6.3" class="n" font-weight="bold" fill="#2a2a2a">8</text></g>
<g transform="translate(150 569)"><path d="M10 2.5L11.79 4.48L14.41 3.93L14.69 6.59L17.13 7.68L15.8 10L17.13 12.32L14.69 13.41L14.41 16.07L11.79 15.52L10 17.5L8.21 15.52L5.59 16.07L5.31 13.41L2.87 12.32L4.2 10L2.87 7.68L5.31 6.59L5.59 3.93L8.21 4.48Z"/><text x="10" y="12.3" font-size="6.3" class="n" font-weight="bold" fill="#2a2a2a">10</text></g>
<g transform="translate(170 569)"><path d="M10 2.4L11.4 4.78L13.8 3.42L13.82 6.18L16.58 6.2L15.22 8.6L17.6 10L15.22 11.4L16.58 13.8L13.82 13.82L13.8 16.58L11.4 15.22L10 17.6L8.6 15.22L6.2 16.58L6.18 13.82L3.42 13.8L4.78 11.4L2.4 10L4.78 8.6L3.42 6.2L6.18 6.18L6.2 3.42L8.6 4.78Z" stroke-width="0.900"/><text x="10" y="12.3" font-size="6.3" class="n" font-weight="bold" fill="#2a2a2a">12</text></g>
<g transform="translate(190 569)"><path d="M10 2.4L11.05 4.7L12.91 2.98L13 5.51L15.37 4.63L14.49 7L17.02 7.09L15.3 8.95L17.6 10L15.3 11.05L17.02 12.91L14.49 13L15.37 15.37L13 14.49L12.91 17.02L11.05 15.3L10 17.6L8.95 15.3L7.09 17.02L7 14.49L4.63 15.37L5.51 13L2.98 12.91L4.7 11.05L2.4 10L4.7 8.95L2.98 7.09L5.51 7L4.63 4.63L7 5.51L7.09 2.98L8.95 4.7Z" stroke-width="0.850"/><text x="10" y="12.3" font-size="6.3" class="n" font-weight="bold" fill="#2a2a2a">16</text></g>
<g transform="translate(210 569)"><path d="M10 2.4L10.73 4.45L11.97 2.66L12.14 4.83L13.8 3.42L13.41 5.56L15.37 4.63L14.44 6.59L16.58 6.2L15.17 7.86L17.34 8.03L15.55 9.27L17.6 10L15.55 10.73L17.34 11.97L15.17 12.14L16.58 13.8L14.44 13.41L15.37 15.37L13.41 14.44L13.8 16.58L12.14 15.17L11.97 17.34L10.73 15.55L10 17.6L9.27 15.55L8.03 17.34L7.86 15.17L6.2 16.58L6.59 14.44L4.63 15.37L5.56 13.41L3.42 13.8L4.83 12.14L2.66 11.97L4.45 10.73L2.4 10L4.45 9.27L2.66 8.03L4.83 7.86L3.42 6.2L5.56 6.59L4.63 4.63L6.59 5.56L6.2 3.42L7.86 4.83L8.03 2.66L9.27 4.45Z" stroke-width="0.700"/><text x="10" y="12.3" font-size="6.3" class="n" font-weight="bold" fill="#2a2a2a">24</text></g>
<g transform="translate(230 569)"><path d="M10 2.4L10.55 4.43L11.48 2.55L11.63 4.64L12.91 2.98L12.64 5.06L14.22 3.68L13.55 5.67L15.37 4.63L14.33 6.45L16.32 5.78L14.94 7.36L17.02 7.09L15.36 8.37L17.45 8.52L15.57 9.45L17.6 10L15.57 10.55L17.45 11.48L15.36 11.63L17.02 12.91L14.94 12.64L16.32 14.22L14.33 13.55L15.37 15.37L13.55 14.33L14.22 16.32L12.64 14.94L12.91 17.02L11.63 15.36L11.48 17.45L10.55 15.57L10 17.6L9.45 15.57L8.52 17.45L8.37 15.36L7.09 17.02L7.36 14.94L5.78 16.32L6.45 14.33L4.63 15.37L5.67 13.55L3.68 14.22L5.06 12.64L2.98 12.91L4.64 11.63L2.55 11.48L4.43 10.55L2.4 10L4.43 9.45L2.55 8.52L4.64 8.37L2.98 7.09L5.06 7.36L3.68 5.78L5.67 6.45L4.63 4.63L6.45 5.67L5.78 3.68L7.36 5.06L7.09 2.98L8.37 4.64L8.52 2.55L9.45 4.43Z" stroke-width="0.600"/><text x="10" y="12.3" font-size="6.3" class="n" font-weight="bold" fill="#2a2a2a">32</text></g>
<g transform="translate(10 589)"><path d="M2.5 7.5H6.5V5.5H13.5V7.5H17.5L15.5 11L17.5 14.5H11.5V12.5H8.5V14.5H2.5L4.5 11ZM6.5 7.5V12.5H8.5M13.5 7.5V12.5H11.5"/></g>
<g transform="translate(30 589)"><path d="M2.5 5.5H8.5V7.5H11.5V5.5H17.5L15.5 9L17.5 12.5H13.5V14.5H6.5V12.5H2.5L4.5 9ZM6.5 12.5V7.5H8.5M13.5 12.5V7.5H11.5"/></g>
<g transform="translate(50 589)"><path d="M2.5 8.5C4 8 5 7.5 6.5 7.5V5.5C9 4.5 11 4.5 13.5 5.5V7.5C15 7.5 16 8 17.5 8.5L15.5 12L17.5 15.5H11.5V13.5H8.5V15.5H2.5L4.5 12ZM6.5 7.5V13H8.5M13.5 7.5V13H11.5"/></g>
<g transform="translate(70 589)"><path d="M2.5 4.5H8.5V6.5H11.5V4.5H17.5L15.5 8L17.5 11.5C16 12 15 12.5 13.5 12.5V14.5C11 15.5 9 15.5 6.5 14.5V12.5C5 12.5 4 12 2.5 11.5L4.5 8ZM6.5 12.5V7H8.5M13.5 12.5V7H11.5"/></g>
<g transform="translate(90 589)"><path d="M6.5 5.5A2 2 0 0 1 10.5 5.5H16.5A2 2 0 0 0 12.5 3.5H8.5A2 2 0 0 0 6.5 5.5V14.5H4.5A2 2 0 0 0 4.5 17.5H12.5A2 2 0 0 0 14.5 15.5V5.5M4.5 14.5A1 1 0 0 1 4.5 16.5H6.5"/></g>
<g transform="translate(110 589)"><path d="M4.5 6.5H15.5V4.5A1.5 1.5 0 0 1 17.5 4.5V13.5A1.5 1.5 0 0 1 15.5 14.5H5.5V16A1.5 1.5 0 0 1 2.5 16V8A1.5 1.5 0 0 1 4.5 6.5ZM5.5 8V14.5M4.5 6.5A1 1 0 0 1 4.5 8.5H2.5M15.5 6.5H17.5"/></g>
<g transform="translate(130 589)"><path d="M2.5 6C5.500 2.500 8 3 10 5C12 7 14.500 7.500 17.5 4.500V14C14.500 17.500 12 17 10 15C8 13 5.500 12.500 2.5 16Z"/></g>
<g transform="translate(150 589)"><path d="M2.5 5.500C4.500 3 6 3 7.500 4.500C9 6 10.500 6 12 4.500C13.500 3 15.500 3 17.5 5.500V15.500C15.500 13 13.500 13 12 14.500C10.500 16 9 16 7.500 14.500C6 13 4.500 13 2.5 15.500Z"/></g>
<g transform="translate(10 633)"><path d="M3.5 3.5H16.5V12.5H12L9.500 16L7.500 12.5H3.5Z"/></g>
<g transform="translate(30 633)"><path d="M6 3.5H14Q16.5 3.5 16.5 6V10Q16.5 12.5 14 12.5H12L9.500 16L7.500 12.5H6Q3.5 12.5 3.5 10V6Q3.5 3.5 6 3.5Z"/></g>
<g transform="translate(50 633)"><path d="M6.200 12.200C0.500 10 1.500 2.800 9.500 2.800C17.500 2.800 18.500 11 10 12.800L5.200 16.200Z"/></g>
<g transform="translate(70 633)"><path d="M7 12C4.500 12.800 3 10.500 4.500 9C2.800 7.500 4 5 6.500 5.500C7 3 10.500 2.500 11.500 4.500C13.500 3 16.500 4.500 16 7C18.500 7.500 18.500 10.500 16.500 11C17 13.500 13.500 14 12.500 12.500C11 14.500 7.500 14 7 12Z" stroke-width="1.150"/><circle cx="5.500" cy="14.500" r="1"/><circle cx="3.500" cy="16.800" r="0.600"/></g>
<g transform="translate(90 633)"><path d="M8.5 4.5H17.5V12.5H8.5ZM8.5 6L3 13"/></g>
<g transform="translate(110 633)"><path d="M8.5 4.5H17.5V12.5H8.5ZM8.5 6.500H5.500L2.500 13"/></g>
<g transform="translate(130 633)"><path d="M7.5 3.5H17.5V11.5H7.5ZM7.5 7H3.5V14.5L10 17"/></g>
<g transform="translate(150 633)"><path d="M10.5 4.5H17.5V12.5H10.5Z" stroke-dasharray="1.2 1"/><path d="M8.5 3.5V13M8.5 6L3 13"/></g>
<g transform="translate(170 633)"><path d="M10.5 4.5H17.5V12.5H10.5Z" stroke-dasharray="1.2 1"/><path d="M8.5 3.5V13M8.5 6.500H5.500L3 13"/></g>
<g transform="translate(190 633)"><path d="M10.5 3.5H17.5V11.5H10.5Z" stroke-dasharray="1.2 1"/><path d="M8.5 3V12M8.5 7H4V14.500L9 17"/></g>
<g transform="translate(210 633)"><path d="M8.5 4.5H17.5V12.5H8.5Z" stroke-dasharray="1.2 1"/><path d="M8.5 6L3 13"/></g>
<g transform="translate(230 633)"><path d="M8.5 4.5H17.5V12.5H8.5Z" stroke-dasharray="1.2 1"/><path d="M8.5 6.500H5.500L2.500 13"/></g>
<g transform="translate(10 653)"><path d="M7.5 4.5H17.5V12H7.5Z" stroke-dasharray="1.2 1"/><path d="M7.5 8H3.5V14L7.500 17"/></g>
<g transform="translate(30 653)"><path d="M10.5 4.5H17.5V12.5H10.5ZM8.5 4V13.5M8.5 6.500L3 13.500"/></g>
<g transform="translate(50 653)"><path d="M10.5 4.5H17.5V12.5H10.5ZM8.5 4V13.5M8.5 6.500H5.500L3 13.500"/></g>
<g transform="translate(70 653)"><path d="M10.5 4.5H17.5V12H10.5ZM8.5 3.500V13M8.5 8H4V14.500L9 17.500"/></g>
<g transform="translate(10 697)"><rect x="3" y="2.5" width="14.500" height="15" fill="#fff"/><path d="M13 5.5V14.5L6 10Z"/></g>
<g transform="translate(30 697)"><rect x="3" y="2.5" width="14.500" height="15" fill="#fff"/><path d="M7 5.5V14.5L14 10Z"/></g>
<g transform="translate(50 697)"><rect x="3" y="2.5" width="14.500" height="15" fill="#fff"/><path d="M14 5.5V14.5L8 10ZM6.5 5.5V14.5"/></g>
<g transform="translate(70 697)"><rect x="3" y="2.5" width="14.500" height="15" fill="#fff"/><path d="M6 5.5V14.5L12 10ZM13.5 5.5V14.5"/></g>
<g transform="translate(90 697)"><rect x="3" y="2.5" width="14.500" height="15" fill="#fff"/><path d="M5 10.5L10 5.5L12 7.5V6H14V9.5L15 10.5H14V15H6V10.5ZM9 15V11.5H11.5V15"/></g>
<g transform="translate(110 697)"><rect x="3" y="2.5" width="14.500" height="15" fill="#fff"/><circle cx="10" cy="10" r="4.5"/><path d="M9 9H10.5V12.5M8.8 12.5H11.8" stroke-width="0.9"/><circle cx="10" cy="7.3" r="0.7" fill="#555" stroke="none"/></g>
<g transform="translate(130 697)"><rect x="3" y="2.5" width="14.500" height="15" fill="#fff"/><path d="M5.5 10V11.5A3 3 0 0 0 11.5 11.5V9.5H13L10.5 6.5L8 9.5H9.5V11.5A1 1 0 0 1 7.5 11.5V10Z"/></g>
<g transform="translate(150 697)"><rect x="3" y="2.5" width="14.500" height="15" fill="#fff"/><path d="M4.5 7.5H12.5V9H14.5V8H15.5V12.5H14.5V11.5H12.5V13H4.5ZM6.5 9.5H10.5V11H6.5Z"/></g>
<g transform="translate(170 697)"><rect x="3" y="2.5" width="14.500" height="15" fill="#fff"/><path d="M6 4.5H11.5L14 7V15.5H6ZM11.5 4.5V7H14"/></g>
<g transform="translate(190 697)"><rect x="3" y="2.5" width="14.500" height="15" fill="#fff"/><path d="M5 8.5H7L10.5 5.5V14.5L7 11.5H5ZM12.5 7.5L14.5 6M12.5 10H15M12.5 12.5L14.5 14"/></g>
<g transform="translate(210 697)"><rect x="3" y="2.5" width="14.500" height="15" fill="#fff"/><text x="10.2" y="14.3" font-size="12" class="n" font-weight="bold" fill="#6a6a6a">?</text></g>
<g transform="translate(230 697)"><rect x="3" y="2.5" width="14.500" height="15" fill="#fff"/></g>
</g>
</svg>
<svg id="grip" width="8" height="8" viewBox="0 0 8 8"><circle cx="5.5" cy="1.5" r="0.8" fill="#888"/><circle cx="5.5" cy="5" r="0.8" fill="#888"/><circle cx="2" cy="5" r="0.8" fill="#888"/></svg>
</div>
<div id="wm">头条 <span class="la">@office</span>技巧</div>
</div>
</body>
</html>
